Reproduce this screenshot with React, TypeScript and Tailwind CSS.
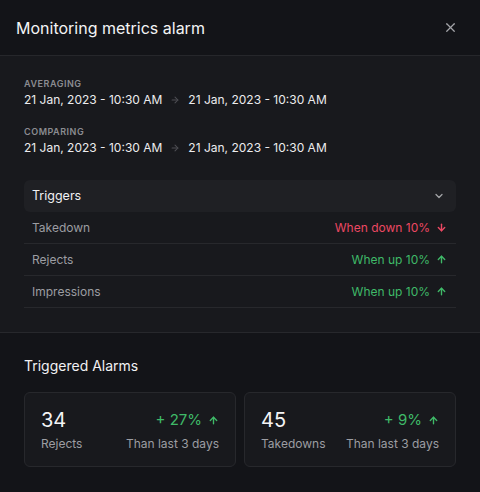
import { X, ChevronDown, ArrowUp, ArrowDown, ArrowRight } from "lucide-react";

const triggers = [
  { name: "Takedown", text: "When down 10%", up: false },
  { name: "Rejects", text: "When up 10%", up: true },
  { name: "Impressions", text: "When up 10%", up: true },
];

const stats = [
  { value: "34", label: "Rejects", change: "+ 27%" },
  { value: "45", label: "Takedowns", change: "+ 9%" },
];

const DateRange = ({ label }: { label: string }) => (
  <div className="flex flex-col">
    <span className="text-[9px] leading-[12px] font-semibold tracking-[0.06em] text-[#8b8c91]">
      {label}
    </span>
    <div className="flex items-center text-[12px] leading-5 text-[#ececee]">
      <span>21 Jan, 2023 - 10:30 AM</span>
      <ArrowRight size={10} strokeWidth={2.5} className="mx-[8px] text-[#4e4f54]" />
      <span>21 Jan, 2023 - 10:30 AM</span>
    </div>
  </div>
);

export default function App() {
  return (
    <div
      className="w-[480px] h-[492px] bg-[#131418] flex flex-col overflow-hidden"
      style={{ fontFamily: "Inter, 'Noto Sans', sans-serif" }}
    >
      {/* Header */}
      <div className="h-[56px] flex items-center justify-between pl-4 pr-[22px] border-b border-[#26272b] shrink-0">
        <h1 className="text-[16px] leading-6 text-[#f4f4f5]">Monitoring metrics alarm</h1>
        <X size={15} strokeWidth={2} className="text-[#a3a4a8]" />
      </div>

      {/* Filters + triggers */}
      <div className="bg-[#18191d] px-6 pt-[22px] pb-6 border-b border-[#27282c] shrink-0">
        <div className="flex flex-col gap-4">
          <DateRange label="AVERAGING" />
          <DateRange label="COMPARING" />
        </div>

        <div className="mt-[22px]">
          <div className="h-8 rounded-md bg-[#1f2024] flex items-center justify-between pl-2 pr-[11px]">
            <span className="text-[12.5px] text-[#f1f1f3]">Triggers</span>
            <ChevronDown size={12} strokeWidth={2.5} className="text-[#a3a4a8]" />
          </div>
          {triggers.map((t) => (
            <div
              key={t.name}
              className="h-8 flex items-center justify-between pl-2 pr-[9px] border-b border-[#27282c]"
            >
              <span className="text-[12px] text-[#9c9da2]">{t.name}</span>
              <span
                className={`flex items-center gap-[6px] text-[12px] ${
                  t.up ? "text-[#3fb968]" : "text-[#ec4863]"
                }`}
              >
                {t.text}
                {t.up ? (
                  <ArrowUp size={11} strokeWidth={3} />
                ) : (
                  <ArrowDown size={11} strokeWidth={3} />
                )}
              </span>
            </div>
          ))}
        </div>
      </div>

      {/* Triggered alarms */}
      <div className="px-6 pt-[23px]">
        <h2 className="text-[14px] leading-5 text-[#f1f1f3]">Triggered Alarms</h2>
        <div className="mt-4 grid grid-cols-2 gap-2">
          {stats.map((s) => (
            <div
              key={s.label}
              className="rounded-md border border-[#27282c] bg-[#18191d] px-4 pt-[13px] pb-[12px] flex justify-between"
            >
              <div className="flex flex-col">
                <span className="text-[20px] leading-7 text-[#f4f4f5]">{s.value}</span>
                <span className="text-[12px] leading-5 text-[#9c9da2]">{s.label}</span>
              </div>
              <div className="flex flex-col items-end">
                <span className="flex items-center gap-[6px] text-[15px] leading-7 text-[#3fb968]">
                  {s.change}
                  <ArrowUp size={11} strokeWidth={3} />
                </span>
                <span className="text-[12px] leading-5 text-[#9c9da2]">Than last 3 days</span>
              </div>
            </div>
          ))}
        </div>
      </div>
    </div>
  );
}
